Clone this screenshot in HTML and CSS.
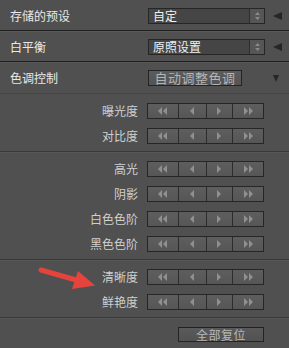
FILE: index.html
```html
<!DOCTYPE html>
<html lang="zh-CN">
<head>
<meta charset="utf-8">
<title>色调控制</title>
<link rel="stylesheet" href="styles.css">
</head>
<body>
<div class="panel">
  <div class="head-row">
    <span class="head-label">存储的预设</span>
    <div class="select"><span class="select-text">自定</span><span class="stepper"><svg width="7" height="10" viewBox="0 0 7 10"><path d="M3.5 1 L6 4 L1 4 Z M3.5 9 L6 6 L1 6 Z" fill="#8a8a8a"/></svg></span></div>
    <span class="tri-left"></span>
  </div>
  <div class="head-row">
    <span class="head-label">白平衡</span>
    <div class="select"><span class="select-text">原照设置</span><span class="stepper"><svg width="7" height="10" viewBox="0 0 7 10"><path d="M3.5 1 L6 4 L1 4 Z M3.5 9 L6 6 L1 6 Z" fill="#8a8a8a"/></svg></span></div>
    <span class="tri-left"></span>
  </div>
  <div class="head-row last">
    <span class="head-label">色调控制</span>
    <div class="auto-btn">自动调整色调</div>
    <span class="tri-down"></span>
  </div>

  <div class="group">
    <div class="s-row"><span class="s-label">曝光度</span><div class="steps"><span class="seg w31"><i class="ll"></i><i class="ll"></i></span><span class="seg w28"><i class="ll"></i></span><span class="seg w27"><i class="rr"></i></span><span class="seg w31"><i class="rr"></i><i class="rr"></i></span></div></div>
    <div class="s-row"><span class="s-label">对比度</span><div class="steps"><span class="seg w31"><i class="ll"></i><i class="ll"></i></span><span class="seg w28"><i class="ll"></i></span><span class="seg w27"><i class="rr"></i></span><span class="seg w31"><i class="rr"></i><i class="rr"></i></span></div></div>
  </div>
  <div class="group">
    <div class="s-row"><span class="s-label">高光</span><div class="steps"><span class="seg w31"><i class="ll"></i><i class="ll"></i></span><span class="seg w28"><i class="ll"></i></span><span class="seg w27"><i class="rr"></i></span><span class="seg w31"><i class="rr"></i><i class="rr"></i></span></div></div>
    <div class="s-row"><span class="s-label">阴影</span><div class="steps"><span class="seg w31"><i class="ll"></i><i class="ll"></i></span><span class="seg w28"><i class="ll"></i></span><span class="seg w27"><i class="rr"></i></span><span class="seg w31"><i class="rr"></i><i class="rr"></i></span></div></div>
    <div class="s-row"><span class="s-label">白色色阶</span><div class="steps"><span class="seg w31"><i class="ll"></i><i class="ll"></i></span><span class="seg w28"><i class="ll"></i></span><span class="seg w27"><i class="rr"></i></span><span class="seg w31"><i class="rr"></i><i class="rr"></i></span></div></div>
    <div class="s-row"><span class="s-label">黑色色阶</span><div class="steps"><span class="seg w31"><i class="ll"></i><i class="ll"></i></span><span class="seg w28"><i class="ll"></i></span><span class="seg w27"><i class="rr"></i></span><span class="seg w31"><i class="rr"></i><i class="rr"></i></span></div></div>
  </div>
  <div class="group">
    <div class="s-row"><span class="s-label">清晰度</span><div class="steps"><span class="seg w31"><i class="ll"></i><i class="ll"></i></span><span class="seg w28"><i class="ll"></i></span><span class="seg w27"><i class="rr"></i></span><span class="seg w31"><i class="rr"></i><i class="rr"></i></span></div></div>
    <div class="s-row"><span class="s-label">鲜艳度</span><div class="steps"><span class="seg w31"><i class="ll"></i><i class="ll"></i></span><span class="seg w28"><i class="ll"></i></span><span class="seg w27"><i class="rr"></i></span><span class="seg w31"><i class="rr"></i><i class="rr"></i></span></div></div>
  </div>
  <div class="footer">
    <div class="reset-btn">全部复位</div>
  </div>

  <svg class="arrow" width="70" height="30" viewBox="0 0 70 30">
    <path d="M3 4 L40 14.5" stroke="#e5443c" stroke-width="5" stroke-linecap="round" fill="none"/>
    <path d="M57 19.5 L34 23 L40 5 Z" fill="#e5443c"/>
  </svg>
</div>
</body>
</html>
```
FILE: styles.css
```css
html, body {
  margin: 0;
  padding: 0;
  background: #505050;
}
body {
  font-family: "Noto Sans CJK SC", "Noto Sans", sans-serif;
  width: 289px;
  height: 348px;
  overflow: hidden;
}
.panel {
  position: relative;
  width: 289px;
  height: 348px;
  background: #505050;
}
.head-row {
  height: 29px;
  display: flex;
  align-items: center;
  border-bottom: 1px solid #1f1f1f;
  border-top: 1px solid #5a5a5a;
}
.head-row:first-child {
  border-top: 1px solid #505050;
}
.head-row.last {
  height: 30px;
  border-bottom: 1px solid #464646;
}
.head-label {
  width: 138px;
  padding-left: 10px;
  font-size: 12px;
  color: #e8e8e8;
  line-height: 16px;
}
.select {
  width: 115px;
  height: 14px;
  border: 1px solid #262626;
  background: #454545;
  display: flex;
  align-items: center;
}
.select-text {
  flex: 1;
  padding-left: 4px;
  font-size: 12px;
  line-height: 14px;
  color: #f0f0f0;
}
.stepper {
  width: 14px;
  height: 14px;
  border-left: 1px solid #2e2e2e;
  background: #565656;
  display: flex;
  align-items: center;
  justify-content: center;
}
.tri-left {
  margin-left: 8px;
  width: 0;
  height: 0;
  border-top: 4px solid transparent;
  border-bottom: 4px solid transparent;
  border-right: 9px solid #262626;
}
.auto-btn {
  width: 92px;
  height: 14px;
  border: 1px solid #242424;
  background: linear-gradient(#5c5c5c, #545454);
  color: #b4b4b4;
  font-size: 13px;
  line-height: 14px;
  text-align: center;
  letter-spacing: 0.5px;
}
.tri-down {
  margin-left: 31px;
  width: 0;
  height: 0;
  border-left: 3.5px solid transparent;
  border-right: 3.5px solid transparent;
  border-top: 7px solid #262626;
}
.group {
  padding: 4px 0 3px;
  border-bottom: 1px solid #3a3a3a;
  box-shadow: 0 1px 0 #575757;
}
.s-row {
  height: 25px;
  display: flex;
  align-items: center;
}
.s-label {
  width: 138px;
  text-align: right;
  font-size: 12px;
  color: #cfcfcf;
  line-height: 16px;
}
.steps {
  margin-left: 9px;
  display: flex;
  height: 16px;
  border: 1px solid #262626;
  box-sizing: border-box;
  width: 117px;
}
.seg {
  height: 14px;
  display: flex;
  align-items: center;
  justify-content: center;
  background: linear-gradient(#5e5e5e, #565656);
  border-right: 1px solid #2c2c2c;
}
.seg:last-child {
  border-right: none;
}
.w31 { width: 30px; }
.w28 { width: 27px; }
.w27 { width: 26px; }
.ll, .rr {
  display: block;
  width: 0;
  height: 0;
  border-top: 4px solid transparent;
  border-bottom: 4px solid transparent;
}
.ll { border-right: 4px solid #909090; }
.rr { border-left: 4px solid #909090; }
.ll + .ll, .rr + .rr { margin-left: 1px; }
.footer {
  display: flex;
  justify-content: flex-end;
  padding: 9px 25px 0 0;
}
.reset-btn {
  width: 84px;
  height: 13px;
  border: 1px solid #232323;
  background: linear-gradient(#5a5a5a, #525252);
  color: #b8b8b8;
  font-size: 12px;
  line-height: 13px;
  text-align: center;
  letter-spacing: 0.5px;
}
.arrow {
  position: absolute;
  left: 38px;
  top: 266px;
}
```
